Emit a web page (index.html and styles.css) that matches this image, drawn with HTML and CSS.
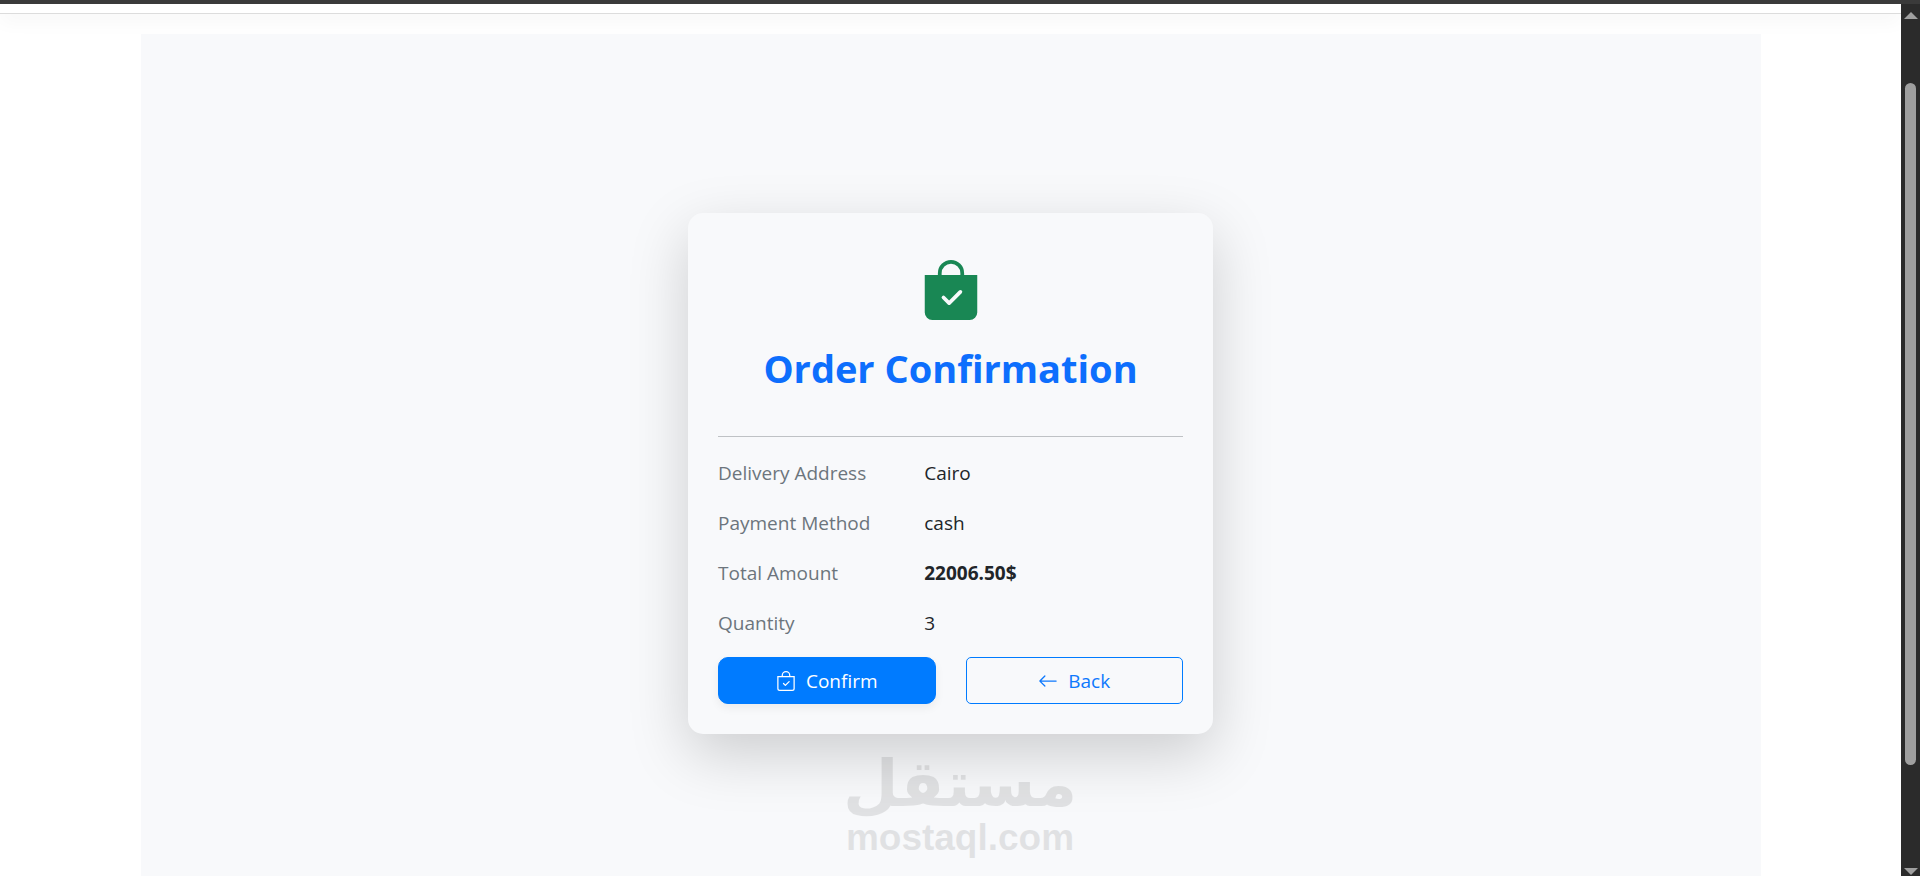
FILE: index.html
```html
<!DOCTYPE html>
<html lang="en">
<head>
  <meta charset="UTF-8" />
  <meta name="viewport" content="width=device-width, initial-scale=1" />
  <title>Order Confirmation</title>
  <link rel="stylesheet" href="styles.css">
</head>
<body>

<div class="window-edge"></div>

<div class="window">
  <div class="page">
    <header class="navbar"></header>

    <main class="container">
      <section class="order-card">
        <svg class="order-icon" viewBox="0 0 16 16" fill="currentColor" aria-hidden="true">
          <path fill-rule="evenodd" d="M10.5 3.5a2.5 2.5 0 0 0-5 0V4h5zm1 0V4H15v10a2 2 0 0 1-2 2H3a2 2 0 0 1-2-2V4h3.500v-.5a3.500 3.500 0 1 1 7 0m-.646 5.354a.5.5 0 0 0-.708-.708L7.500 10.793 6.354 9.646a.5.5 0 1 0-.708.708l1.500 1.500a.5.5 0 0 0 .708 0z"/>
        </svg>
        <h1>Order Confirmation</h1>
        <hr>
        <dl class="details">
          <dt>Delivery Address</dt>
          <dd>Cairo</dd>
          <dt>Payment Method</dt>
          <dd>cash</dd>
          <dt>Total Amount</dt>
          <dd class="total">22006.50$</dd>
          <dt>Quantity</dt>
          <dd>3</dd>
        </dl>
        <div class="actions">
          <button type="submit" class="btn btn-confirm">
            <svg viewBox="0 0 16 16" fill="currentColor" aria-hidden="true">
              <path fill-rule="evenodd" d="M10.854 8.146a.5.5 0 0 1 0 .708l-3 3a.5.5 0 0 1-.708 0l-1.500-1.500a.5.5 0 0 1 .708-.708L7.500 10.793l2.646-2.647a.5.5 0 0 1 .708 0"/>
              <path d="M8 1a2.500 2.500 0 0 1 2.500 2.500V4h-5v-.5A2.500 2.500 0 0 1 8 1m3.500 3v-.5a3.500 3.500 0 1 0-7 0V4H1v10a2 2 0 0 0 2 2h10a2 2 0 0 0 2-2V4zM2 5h12v9a1 1 0 0 1-1 1H3a1 1 0 0 1-1-1z"/>
            </svg>
            Confirm
          </button>
          <button type="button" class="btn btn-back">
            <svg viewBox="0 0 16 16" fill="currentColor" aria-hidden="true">
              <path fill-rule="evenodd" d="M15 8a.5.5 0 0 0-.5-.5H2.707l3.147-3.146a.5.5 0 1 0-.708-.708l-4 4a.5.5 0 0 0 0 .708l4 4a.5.5 0 0 0 .708-.708L2.707 8.500H14.500A.5.5 0 0 0 15 8"/>
            </svg>
            Back
          </button>
        </div>
      </section>
    </main>
  </div>

  <div class="scrollbar" aria-hidden="true">
    <span class="arrow arrow-up"></span>
    <span class="thumb"></span>
    <span class="arrow arrow-down"></span>
  </div>
</div>

<div class="watermark">
  <span class="watermark-ar" lang="ar" dir="rtl">مستقل</span>
  <span class="watermark-en">mostaql.com</span>
</div>

</body>
</html>
```

FILE: styles.css
```css
* {
  box-sizing: border-box;
}
body {
  margin: 0;
  height: 100vh;
  display: flex;
  flex-direction: column;
  overflow: hidden;
  position: relative;
  background: #fff;
  color: #212529;
  font-family: 'Segoe UI', 'Open Sans', 'Noto Sans', sans-serif;
  font-size: 19px;
  line-height: 30px;
}
.window-edge {
  flex: none;
  height: 4px;
  background: #3a3a3a;
}
.window {
  flex: 1;
  min-height: 0;
  display: flex;
}
.page {
  flex: 1;
  overflow: hidden;
}

/* Bottom of the navbar */
.navbar {
  height: 10px;
  margin-bottom: 20px;
  border-bottom: 1px solid #dcdcdc;
  box-shadow: 0 5px 20px rgba(0,0,0,0.06);
}
.container {
  width: 90%;
  max-width: 1620px;
  min-height: 100vh;
  margin: 0 auto;
  padding-top: 3px;
  display: flex;
  justify-content: center;
  align-items: center;
  background: #f8f9fb;
}

/* Order card */
.order-card {
  width: 100%;
  max-width: 525px;
  padding: 30px;
  border-radius: 15px;
  background: #f8f9fb;
  box-shadow: 0 20px 60px rgba(0,0,0,0.175);
}
.order-icon {
  display: block;
  width: 60px;
  height: 60px;
  margin: 17px auto 23px;
  color: #198754;
}
h1 {
  margin: 0 0 43px;
  color: #0d6efd;
  font-size: 38px;
  line-height: 50px;
  font-weight: 700;
  text-align: center;
}
hr {
  margin: 0 0 21px;
  border: none;
  border-top: 1px solid #bfc2c5;
}
.details {
  display: grid;
  grid-template-columns: 5fr 7fr;
  row-gap: 20px;
  margin: 0 -30px 19px 0;
}
.details dt {
  color: #6c757d;
}
.details dd {
  margin: 0;
}
.details .total {
  font-weight: 700;
}

/* Buttons */
.actions {
  display: flex;
  gap: 30px;
}
.btn {
  flex: 1;
  display: flex;
  justify-content: center;
  align-items: center;
  gap: 10px;
  padding: 8px 15px 7px;
  border: 1px solid #007bff;
  font: inherit;
  cursor: pointer;
}
.btn svg {
  width: 20px;
  height: 20px;
}
.btn-confirm {
  border-radius: 10px;
  background: #007bff;
  color: #fff;
  box-shadow: 0 4px 10px rgba(0,0,0,0.06);
}
.btn-back {
  border-radius: 5px;
  background: transparent;
  color: #0d78fd;
}

/* Scrollbar */
.scrollbar {
  width: 19px;
  display: flex;
  flex-direction: column;
  align-items: center;
  padding: 8px 0 1px;
  background: #2b2b2b;
}
.arrow {
  border: 7px solid transparent;
}
.arrow-up {
  border-top: none;
  border-bottom-color: #9f9f9f;
}
.arrow-down {
  margin-top: auto;
  border-bottom: none;
  border-top-color: #9f9f9f;
}
.thumb {
  width: 11px;
  height: 79%;
  margin-top: 64px;
  border-radius: 6px;
  background: #9f9f9f;
}

/* Watermark over the page */
.watermark {
  position: absolute;
  left: 0;
  right: 0;
  bottom: 18px;
  display: flex;
  flex-direction: column;
  align-items: center;
  color: #000;
  font-weight: 700;
  opacity: 0.09;
  pointer-events: none;
}
.watermark-ar {
  font-family: 'DejaVu Sans', sans-serif;
  font-size: 64px;
  line-height: 68px;
}
.watermark-en {
  font-family: 'Liberation Sans', Arial, sans-serif;
  font-size: 37px;
  line-height: 40px;
}
```
